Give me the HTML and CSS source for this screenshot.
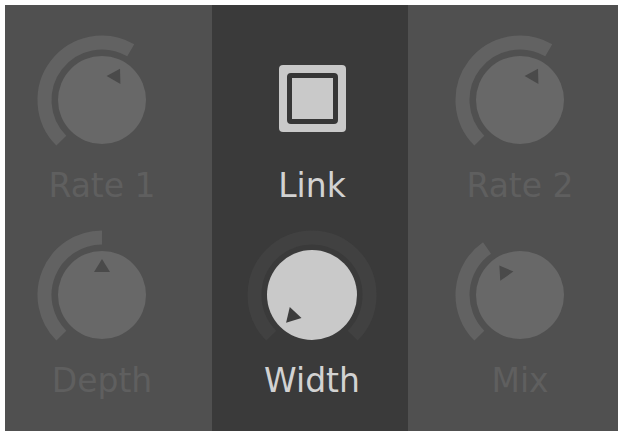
FILE: index.html
```html
<!DOCTYPE html>
<html lang="en">
<head>
    <meta charset="utf-8">
    <title>Chorus</title>
<link rel="stylesheet" href="styles.css">
</head>
<body>
    <div class="panel">
        <div class="col dim left">
            <div class="cell">
                <svg class="knob" viewBox="0 0 140 137">
                    <path class="arc" d="M29.34 110.66 A57.5 57.5 0 0 1 98.75 20.2"/>
                    <circle class="face" cx="70" cy="70" r="44"/>
                    <polygon class="pointer" points="70,34 62,47 78,47" transform="rotate(30 70 70)"/>
                </svg>
                <div class="label">Rate 1</div>
            </div>
            <div class="cell">
                <svg class="knob" viewBox="0 0 140 137">
                    <path class="arc" d="M29.34 110.66 A57.5 57.5 0 0 1 70 12.5"/>
                    <circle class="face" cx="70" cy="70" r="44"/>
                    <polygon class="pointer" points="70,34 62,47 78,47"/>
                </svg>
                <div class="label">Depth</div>
            </div>
        </div>
        <div class="col mid">
            <div class="cell">
                <div class="check-area">
                    <div class="check"><div class="check-box"></div></div>
                </div>
                <div class="label">Link</div>
            </div>
            <div class="cell">
                <svg class="knob" viewBox="0 0 140 137">
                    <path class="track" d="M29.34 110.66 A57.5 57.5 0 1 1 110.66 110.66"/>
                    <circle class="face" cx="70" cy="70" r="45"/>
                    <polygon class="pointer" points="70,32 62,46 78,46" transform="rotate(-137 70 70)"/>
                </svg>
                <div class="label">Width</div>
            </div>
        </div>
        <div class="col dim right">
            <div class="cell">
                <svg class="knob" viewBox="0 0 140 137">
                    <path class="arc" d="M29.34 110.66 A57.5 57.5 0 0 1 98.75 20.2"/>
                    <circle class="face" cx="70" cy="70" r="44"/>
                    <polygon class="pointer" points="70,34 62,47 78,47" transform="rotate(30 70 70)"/>
                </svg>
                <div class="label">Rate 2</div>
            </div>
            <div class="cell">
                <svg class="knob" viewBox="0 0 140 137">
                    <path class="arc" d="M29.34 110.66 A57.5 57.5 0 0 1 37.02 22.9"/>
                    <circle class="face" cx="70" cy="70" r="44"/>
                    <polygon class="pointer" points="70,34 62,47 78,47" transform="rotate(-35 70 70)"/>
                </svg>
                <div class="label">Mix</div>
            </div>
        </div>
    </div>
</body>
</html>
```

FILE: styles.css
```css
body{
    margin: 5px;
    background-color: #fff;
    font-family: "DejaVu Sans", sans-serif;
}
.panel{
    display: grid;
    grid-template-columns: 207px 196px 207px;
    height: 426px;
    background-color: #505050;
}
.col{
    display: flex;
    flex-direction: column;
    align-items: flex-start;
    gap: 20px;
    padding-top: 25px;
}
.left{
    padding-left: 27px;
}
.mid{
    padding-left: 30px;
    background-color: #3a3a3a;
}
.right{
    padding-left: 42px;
}
.cell{
    display: flex;
    flex-direction: column;
    align-items: center;
    width: 140px;
}
.knob{
    display: block;
    width: 140px;
    height: 137px;
}
.label{
    width: 160px;
    text-align: center;
    font-size: 33px;
    line-height: 38px;
    color: #d2d2d2;
}
.dim .label{
    color: #5f5f5f;
}

/* knob parts */
.arc, .track{
    fill: none;
    stroke-width: 14;
}
.arc{
    stroke: #626262;
}
.track{
    stroke: #414141;
}
.face{
    fill: #c9c9c9;
}
.dim .face{
    fill: #686868;
}
.pointer{
    fill: #3c3c3c;
}
.dim .pointer{
    fill: #4a4a4a;
}

/* link checkbox */
.check-area{
    display: flex;
    align-items: center;
    justify-content: center;
    width: 140px;
    height: 137px;
}
.check{
    width: 67px;
    height: 67px;
    box-sizing: border-box;
    padding: 8px;
    border-radius: 4px;
    background-color: #c9c9c9;
}
.check-box{
    width: 51px;
    height: 51px;
    box-sizing: border-box;
    border: 5px solid #363636;
    border-radius: 4px;
    background-color: #c9c9c9;
}
```
